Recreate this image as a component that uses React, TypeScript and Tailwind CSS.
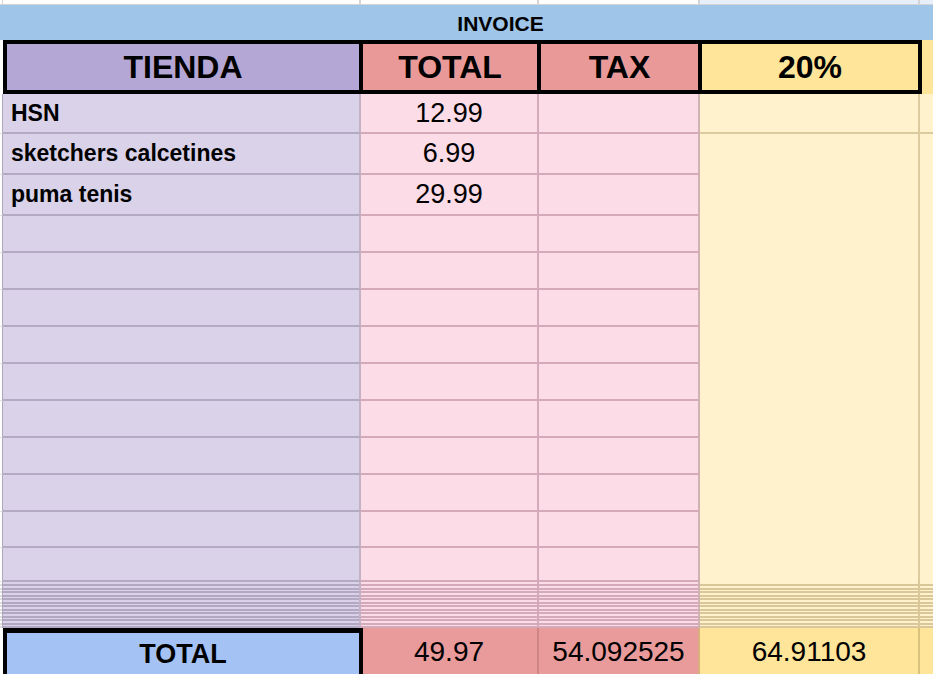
const rows = [
  { name: "HSN", total: "12.99" },
  { name: "sketchers calcetines", total: "6.99" },
  { name: "puma tenis", total: "29.99" },
  { name: "", total: "" },
  { name: "", total: "" },
  { name: "", total: "" },
  { name: "", total: "" },
  { name: "", total: "" },
  { name: "", total: "" },
  { name: "", total: "" },
  { name: "", total: "" },
  { name: "", total: "" },
  { name: "", total: "" },
];

const hidden = Array.from({ length: 13 }, (_, i) => i);

const Stack = ({ bg, line, edge }: { bg: string; line: string; edge: string }) => (
  <div className={`flex flex-col pt-[1px] ${bg} ${edge}`}>
    {hidden.map((i) => (
      <div key={i} className={`h-[3.5px] border-b-2 ${line}`} />
    ))}
  </div>
);

const App = () => {
  return (
    <div className="h-[674px] w-[933px] overflow-hidden bg-white font-['Liberation_Sans',Arial,sans-serif] text-black">
      <div className="grid grid-cols-[3px_358px_178px_161px_220px_1fr] grid-rows-[5px_35px_54px_40px_41px_41px_37px_37px_37px_37px_37px_37px_37px_37px_36px_34px_46px_46px]">
        {/* merged yellow area */}
        <div className="col-start-5 row-start-5 row-span-12 border-r-2 border-[#dccb9e] bg-[#fff2cc]" />
        <div className="col-start-6 row-start-5 row-span-12 bg-[#fff2cc]" />

        {/* partial top row */}
        <div className="border-r border-b border-[#d4d4d4] bg-white" />
        <div className="border-r-2 border-b border-[#d4d4d4] bg-white" />
        <div className="border-r-2 border-b border-[#d4d4d4] bg-white" />
        <div className="border-r-2 border-b border-[#d4d4d4] bg-white" />
        <div className="border-r-2 border-b border-[#d4d4d4] bg-[#e8effc]" />
        <div className="border-b border-[#d4d4d4] bg-[#e8effc]" />

        {/* invoice title */}
        <div className="col-span-6 flex items-center justify-center bg-[#9fc5e8] pl-[68px] pt-[2px] text-[21px] font-bold leading-none">
          INVOICE
        </div>

        {/* header */}
        <div className="bg-white" />
        <div className="relative z-10 -mr-[2px] flex items-center justify-center border-4 border-black bg-[#b4a7d6] text-[32px] font-bold leading-none">
          TIENDA
        </div>
        <div className="relative z-10 -mx-[2px] flex items-center justify-center border-4 border-black bg-[#ea9999] text-[32px] font-bold leading-none">
          TOTAL
        </div>
        <div className="relative z-10 -mx-[2px] flex items-center justify-center border-4 border-black bg-[#ea9999] text-[32px] font-bold leading-none">
          TAX
        </div>
        <div className="relative z-10 -mx-[2px] flex items-center justify-center border-4 border-black bg-[#ffe599] text-[32px] font-bold leading-none">
          20%
        </div>
        <div className="bg-[#ffe599]" />

        {/* data rows */}
        {rows.map((r, i) => (
          <div key={i} className="contents">
            <div className="border-r border-b border-r-[#b0a8b8] border-b-[#e0e0e0] bg-white" />
            <div className="flex items-center border-r-2 border-b-2 border-r-[#c5b0c5] border-b-[#b4aac4] bg-[#d9d2e9] pl-[8px] text-[23px] font-bold leading-none">
              {r.name}
            </div>
            <div className="flex items-center justify-center border-r-2 border-b-2 border-[#d4aabb] bg-[#fbdce7] text-[27px] leading-none">
              {r.total}
            </div>
            <div className="border-r-2 border-b-2 border-r-[#cfb2b2] border-b-[#d4aabb] bg-[#fbdce7]" />
            {i === 0 && (
              <>
                <div className="border-r-2 border-b-2 border-[#dccb9e] bg-[#fff2cc]" />
                <div className="border-b-2 border-[#dccb9e] bg-[#fff2cc]" />
              </>
            )}
          </div>
        ))}

        {/* collapsed rows */}
        <Stack bg="bg-white" line="border-b-[#dcdcdc]" edge="border-r border-r-[#b0a8b8]" />
        <Stack bg="bg-[#d9d2e9]" line="border-b-[#b2a8c2]" edge="border-r-2 border-r-[#c5b0c5]" />
        <Stack bg="bg-[#fbdce7]" line="border-b-[#d4aabb]" edge="border-r-2 border-r-[#d4aabb]" />
        <Stack bg="bg-[#fbdce7]" line="border-b-[#d4aabb]" edge="border-r-2 border-r-[#cfb2b2]" />
        <Stack bg="bg-[#fff2cc]" line="border-b-[#d9c79a]" edge="border-r-2 border-r-[#d9c79a]" />
        <Stack bg="bg-[#fff2cc]" line="border-b-[#d9c79a]" edge="" />

        {/* totals */}
        <div className="bg-white" />
        <div className="relative z-10 -mr-[2px] flex items-center justify-center border-x-4 border-t-[5px] border-black bg-[#a4c2f4] pt-[2px] text-[27px] font-bold leading-none">
          TOTAL
        </div>
        <div className="flex items-center justify-center border-r-2 border-[#cf8585] bg-[#e99a9a] pt-[2px] text-[28px] leading-none">
          49.97
        </div>
        <div className="flex items-center justify-center border-r-2 border-[#d8b07c] bg-[#e99a9a] pt-[2px] text-[28px] leading-none">
          54.092525
        </div>
        <div className="flex items-center justify-center border-r-2 border-[#d9c37c] bg-[#ffe599] pt-[2px] text-[28px] leading-none">
          64.91103
        </div>
        <div className="bg-[#ffe599]" />
      </div>
    </div>
  );
};

export default App;
